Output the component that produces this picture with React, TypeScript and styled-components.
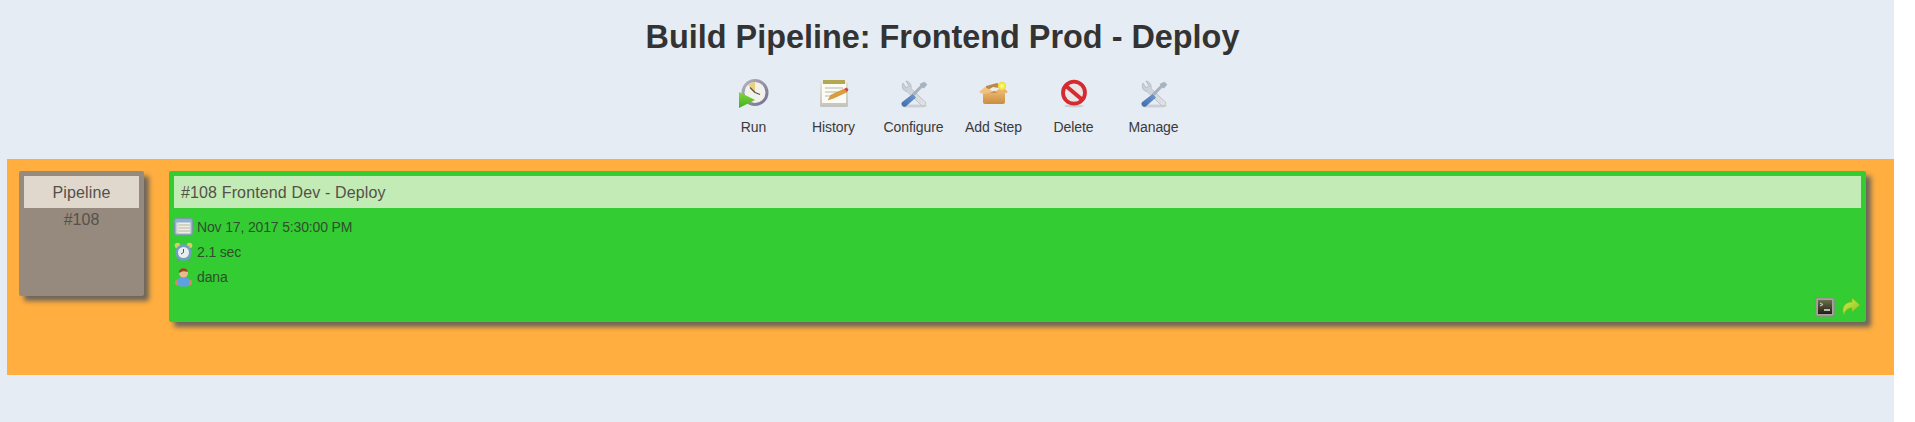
import React from "react";
import styled, { createGlobalStyle } from "styled-components";

const Global = createGlobalStyle`
  html, body { margin: 0; padding: 0; background: #fff; }
  body { font-family: "Liberation Sans", Arial, sans-serif; color: #333; }
  * { box-sizing: border-box; }
`;

const Page = styled.div`
  width: 1894px;
  height: 422px;
  background: #e6ecf4;
  padding-top: 18px;
`;

const Title = styled.h1`
  margin: 0;
  padding-right: 9px;
  font-size: 32.4px;
  line-height: 38px;
  font-weight: 700;
  text-align: center;
  color: #333;
`;

const Toolbar = styled.div`
  display: flex;
  justify-content: center;
  margin: 22px 0 0 13px;
  height: 81px;
`;

const Tool = styled.div`
  width: 80px;
  display: flex;
  flex-direction: column;
  align-items: center;
  font-size: 14px;
  letter-spacing: -0.1px;
  line-height: 16px;
  color: #3a3a3a;
`;

const ToolIcon = styled.svg`
  width: 32px;
  height: 32px;
  margin-bottom: 9px;
  display: block;
`;

const Stage = styled.div`
  margin-left: 7px;
  height: 216px;
  background: #ffae3f;
  padding: 12px 28px 0 12px;
  display: flex;
  gap: 25px;
  align-items: flex-start;
`;

const Card = styled.div<{ $bg: string; $grow?: boolean; $h: number }>`
  position: relative;
  background: ${(p) => p.$bg};
  height: ${(p) => p.$h}px;
  border-radius: 2px;
  padding: 5px;
  box-shadow: 5px 5px 5px #6d655b;
  ${(p) => (p.$grow ? "flex: 1;" : "width: 125px; flex: none;")}
`;

const CardHead = styled.div<{ $bg: string; $center?: boolean }>`
  height: 32px;
  line-height: 33px;
  background: ${(p) => p.$bg};
  font-size: 16px;
  letter-spacing: 0.14px;
  color: #55504a;
  text-align: ${(p) => (p.$center ? "center" : "left")};
  padding-left: ${(p) => (p.$center ? 0 : 7)}px;
`;

const PipelineNo = styled.div`
  font-size: 16px;
  line-height: 18px;
  margin-top: 3px;
  text-align: center;
  color: #57514a;
`;

const Meta = styled.div`
  display: flex;
  flex-direction: column;
  gap: 5px;
  margin-top: 9px;
`;

const MetaRow = styled.div`
  display: flex;
  align-items: center;
  height: 20px;
  gap: 4px;
  font-size: 14px;
  letter-spacing: -0.15px;
  color: #2f4f2d;
`;

const MetaIcon = styled.svg`
  width: 19px;
  height: 20px;
  flex: none;
`;

const Actions = styled.div`
  position: absolute;
  right: 5px;
  bottom: 5px;
  display: flex;
  gap: 6px;
`;

const ActionIcon = styled.svg`
  width: 20px;
  height: 20px;
  display: block;
`;

const Wrench = () => (
  <>
    <defs>
      <linearGradient id="steel" x1="0" y1="0" x2="1" y2="1">
        <stop offset="0" stopColor="#c2ccd6" />
        <stop offset="1" stopColor="#e2e4e2" />
      </linearGradient>
      <linearGradient id="blue" x1="1" y1="0" x2="0" y2="1">
        <stop offset="0" stopColor="#6b9ad2" />
        <stop offset="1" stopColor="#3d6cab" />
      </linearGradient>
    </defs>
    <ellipse cx="16" cy="28" rx="13" ry="1.600" fill="#bcc1c6" opacity=".65" />
    <path d="M5 5c-2 4 0 8 4 8.500l14.500 14c2 1.500 5-1 4-3.500L13 10.500c1-3-1-7-5-7.500l2.500 4.500-2 2.500z" fill="url(#steel)" stroke="#a6aeb6" strokeWidth=".6" />
    <path d="M26.500 4l2.500 2.500-3 3.500-2-.5-7.500 8-2-2 8-8-.5-1.500z" fill="#a7b3bf" stroke="#97a3ad" strokeWidth=".4" />
    <path d="M14.500 16.500l3 3-9.500 8.500c-2 1.500-5-.5-4-3.500z" fill="url(#blue)" stroke="#3c659e" strokeWidth=".5" />
  </>
);

const tools: { label: string; icon: React.ReactNode }[] = [
  {
    label: "Run",
    icon: (
      <>
        <defs>
          <linearGradient id="ring" x1="0" y1="0" x2="1" y2="1">
            <stop offset="0" stopColor="#b7b5c2" />
            <stop offset="1" stopColor="#6f6d8c" />
          </linearGradient>
          <linearGradient id="play" x1="0" y1="0" x2="0" y2="1">
            <stop offset="0" stopColor="#7fd934" />
            <stop offset="1" stopColor="#46ae22" />
          </linearGradient>
        </defs>
        <circle cx="17" cy="14.500" r="13.500" fill="url(#ring)" />
        <circle cx="17" cy="14.500" r="10.500" fill="#f2f1ea" />
        <path d="M17 14.500V4a10.500 10.500 0 0 0-7 3z" fill="#e6d27f" />
        <path d="M17 14.500l-5-5M17 14.500l5 2" stroke="#555" strokeWidth="1.300" />
        <path d="M1 14l16 8-16 8z" fill="url(#play)" />
      </>
    ),
  },
  {
    label: "History",
    icon: (
      <>
        <defs>
          <linearGradient id="pad" x1="0" y1="0" x2="0" y2="1">
            <stop offset="0" stopColor="#e3e3dd" />
            <stop offset="1" stopColor="#c2c2bf" />
          </linearGradient>
        </defs>
        <rect x="2" y="4" width="28" height="25" rx="1.500" fill="url(#pad)" />
        <rect x="4" y="5" width="24" height="20" fill="#fbfaf3" />
        <rect x="5" y="2" width="22" height="4" fill="#b5a652" />
        <path d="M7 10h18M7 14h13M7 18h8" stroke="#b7b7b2" strokeWidth="1.200" />
        <path d="M10 22l3-5 13-6 3 3-13 6z" fill="#dc9e3a" stroke="#b57f2b" strokeWidth=".4" />
        <path d="M26 11l3 3 1.500-2.500-2-2z" fill="#d4463f" />
      </>
    ),
  },
  { label: "Configure", icon: <Wrench /> },
  {
    label: "Add Step",
    icon: (
      <>
        <defs>
          <linearGradient id="box" x1="0" y1="0" x2="0" y2="1">
            <stop offset="0" stopColor="#eab56b" />
            <stop offset="1" stopColor="#c98d41" />
          </linearGradient>
          <radialGradient id="spark">
            <stop offset="0" stopColor="#fdfcb8" />
            <stop offset=".6" stopColor="#f6ee3a" />
            <stop offset="1" stopColor="#ecd54a" />
          </radialGradient>
        </defs>
        <path d="M5 14h22v10a2 2 0 0 1-2 2H7a2 2 0 0 1-2-2z" fill="url(#box)" />
        <path d="M8 8l11-3 7 5-1 5H7z" fill="#b98a4e" />
        <path d="M10 12l5-3 6 1 2 3H10z" fill="#efece2" />
        <path d="M7 9L1 14l4 2 11-2z" fill="#efc27f" />
        <path d="M25 9l5 5-4 2-10-2z" fill="#e9b46d" />
        <circle cx="24" cy="8" r="4.200" fill="url(#spark)" />
      </>
    ),
  },
  {
    label: "Delete",
    icon: (
      <>
        <ellipse cx="16" cy="28" rx="10" ry="1.500" fill="#bcc1c6" opacity=".65" />
        <circle cx="16" cy="14.700" r="11" fill="#e9e6e6" stroke="#d42a30" strokeWidth="3.800" />
        <path d="M8 8l16 13.500" stroke="#d42a30" strokeWidth="4" />
      </>
    ),
  },
  { label: "Manage", icon: <Wrench /> },
];

export default function App() {
  return (
    <>
      <Global />
      <Page>
        <Title>Build Pipeline: Frontend Prod - Deploy</Title>
        <Toolbar>
          {tools.map((t) => (
            <Tool key={t.label}>
              <ToolIcon viewBox="0 0 32 32">{t.icon}</ToolIcon>
              {t.label}
            </Tool>
          ))}
        </Toolbar>
        <Stage>
          <Card $bg="#958a7d" $h={125}>
            <CardHead $bg="#e0d8cd" $center>Pipeline</CardHead>
            <PipelineNo>#108</PipelineNo>
          </Card>
          <Card $bg="#33cc33" $h={151} $grow>
            <CardHead $bg="#c3ebb5">#108 Frontend Dev - Deploy</CardHead>
            <Meta>
              <MetaRow>
                <MetaIcon viewBox="0 0 19 20">
                  <rect x=".5" y="1.500" width="18" height="16.500" rx="2" fill="#8fb0d0" stroke="#7d99a8" />
                  <rect x="2.500" y="5.500" width="14" height="11" fill="#f2efe2" />
                  <path d="M5 8h11M5 11h11M5 14h11" stroke="#b4b4a4" />
                  <path d="M4 5.500v11" stroke="#c9c9b8" />
                </MetaIcon>
                Nov 17, 2017 5:30:00 PM
              </MetaRow>
              <MetaRow>
                <MetaIcon viewBox="0 0 19 20">
                  <circle cx="3.500" cy="3.500" r="2.800" fill="#e3c95a" />
                  <circle cx="15.500" cy="3.500" r="2.800" fill="#e3c95a" />
                  <path d="M5 17l-2 2.500M14 17l2 2.500" stroke="#7d8c95" strokeWidth="1.500" />
                  <circle cx="9.500" cy="10.500" r="8.200" fill="#6f9fc4" />
                  <circle cx="9.500" cy="10.500" r="5.500" fill="#e8edee" />
                  <path d="M9.500 7v3.500l-2.500 1.500" stroke="#555" fill="none" />
                </MetaIcon>
                2.1 sec
              </MetaRow>
              <MetaRow>
                <MetaIcon viewBox="0 0 19 20">
                  <path d="M2 18c-1-5 3-8 7.500-8s8.500 3 7.500 8c-3 2-12 2-15 0z" fill="#5f9fe2" />
                  <rect x="1" y="13" width="3" height="5" rx="1.500" fill="#d88a55" />
                  <rect x="15" y="13" width="3" height="5" rx="1.500" fill="#d88a55" />
                  <circle cx="9.500" cy="6" r="4.500" fill="#eeb88e" />
                  <path d="M5 6c-1-5 8-7 9-1-3-1-6-1-7 0z" fill="#8f4a1e" />
                </MetaIcon>
                dana
              </MetaRow>
            </Meta>
            <Actions>
              <ActionIcon viewBox="0 0 20 20">
                <defs>
                  <linearGradient id="term" x1="0" y1="0" x2="0" y2="1">
                    <stop offset="0" stopColor="#6b6d4c" />
                    <stop offset="1" stopColor="#1f1f14" />
                  </linearGradient>
                </defs>
                <rect x=".8" y=".8" width="18.400" height="18.400" rx="2" fill="#a5a29c" stroke="#8a8880" strokeWidth="1" />
                <rect x="3" y="3" width="14" height="14" fill="url(#term)" />
                <path d="M5 6l3 1.500L5 9" stroke="#d8d8c8" fill="none" />
                <path d="M9 13h6" stroke="#e8e8e0" strokeWidth="1.500" />
              </ActionIcon>
              <ActionIcon viewBox="0 0 20 20">
                <defs>
                  <linearGradient id="arrow" x1="0" y1="0" x2="1" y2="1">
                    <stop offset="0" stopColor="#d2ee4c" />
                    <stop offset="1" stopColor="#86c21e" />
                  </linearGradient>
                </defs>
                <path d="M11 1l8 7-8 7v-4C7 11 4 13 3 18 0 12 3 5 11 5z" fill="url(#arrow)" stroke="#7fb61e" strokeWidth=".6" />
              </ActionIcon>
            </Actions>
          </Card>
        </Stage>
      </Page>
    </>
  );
}
